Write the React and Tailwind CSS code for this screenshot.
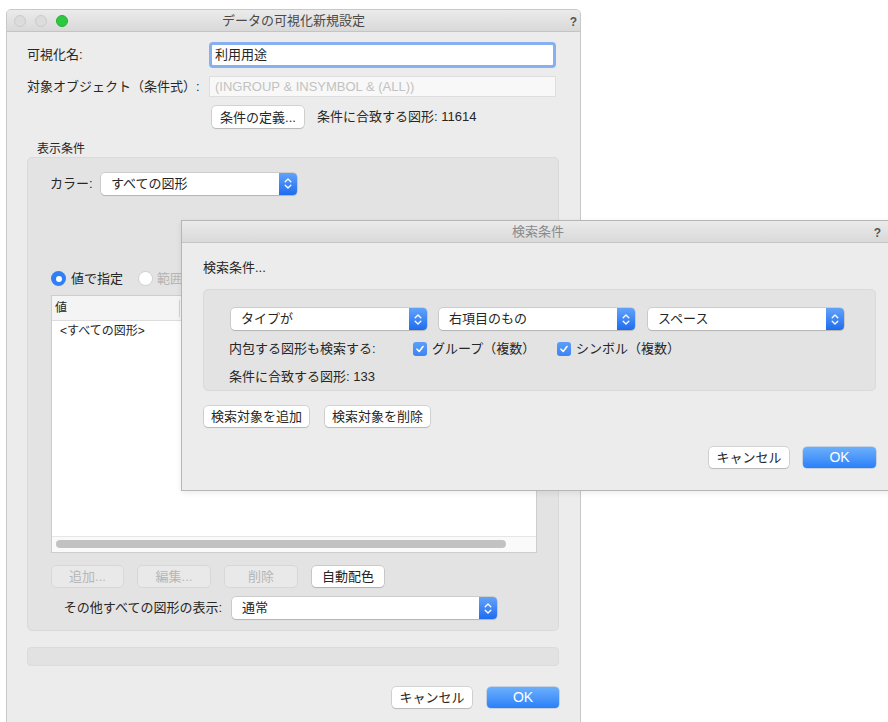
import React from "react";

const font = "font-['Liberation_Sans','Noto_Sans_CJK_JP',sans-serif]";

function Stepper() {
  return (
    <div className="w-[18px] h-full shrink-0 rounded-r-[4px] bg-gradient-to-b from-[#62a2f9] to-[#1d6cef] flex items-center justify-center">
      <svg width="8" height="13" viewBox="0 0 8 13" fill="none" stroke="white" strokeWidth="1.3" strokeLinecap="round" strokeLinejoin="round">
        <path d="M1.2 4.8 L4 2 L6.8 4.8" />
        <path d="M1.2 8.2 L4 11 L6.8 8.2" />
      </svg>
    </div>
  );
}

function Popup({ label, className = "" }) {
  return (
    <div className={"flex h-[22px] rounded-[4px] bg-white shadow-[0_0_0_0.5px_rgba(0,0,0,0.2),0_1px_1px_rgba(0,0,0,0.12)] " + className}>
      <div className="flex-1 pl-[10px] text-[13px] leading-[22px] text-[#262626] whitespace-nowrap">{label}</div>
      <Stepper />
    </div>
  );
}

function Btn({ children, className = "", disabled = false }) {
  const look = disabled
    ? "bg-[#e9e9e9] text-[#b6b6b6] shadow-[0_0_0_0.5px_rgba(0,0,0,0.1)]"
    : "bg-white text-[#262626] shadow-[0_0_0_0.5px_rgba(0,0,0,0.22),0_1px_1px_rgba(0,0,0,0.12)]";
  return (
    <div className={"h-[21px] rounded-[4px] flex items-center justify-center text-[13px] leading-[21px] whitespace-nowrap " + look + " " + className}>
      {children}
    </div>
  );
}

function OkBtn({ className = "" }) {
  return (
    <div className={"h-[21px] rounded-[4px] flex items-center justify-center text-[14px] text-white bg-gradient-to-b from-[#6cb0fb] to-[#2a7ff8] shadow-[0_0_0_0.5px_rgba(0,60,160,0.3)] " + className}>
      OK
    </div>
  );
}

function Check({ label }) {
  return (
    <div className="flex items-center">
      <div className="w-[14px] h-[14px] rounded-[3px] bg-gradient-to-b from-[#5d9ef8] to-[#3a84f5] flex items-center justify-center">
        <svg width="10" height="10" viewBox="0 0 10 10" fill="none" stroke="white" strokeWidth="1.6" strokeLinecap="round" strokeLinejoin="round">
          <path d="M2 5.2 L4.2 7.5 L8 2.5" />
        </svg>
      </div>
      <span className="ml-[5px] text-[13px] text-[#262626]">{label}</span>
    </div>
  );
}

// help glyph sits at the right end of each title bar
function TitleBar({ title, active, helpClass }) {
  return (
    <div className="relative h-[22px] shrink-0 bg-gradient-to-b from-[#ebebeb] to-[#d9d9d9] border-b border-[#c4c4c4] flex items-center justify-center">
      {active && (
        <div className="absolute left-[7px] top-[5px] flex gap-[9px]">
          <div className="w-[12px] h-[12px] rounded-full bg-[#dcdcdc] border border-[#cbcbcb]" />
          <div className="w-[12px] h-[12px] rounded-full bg-[#dcdcdc] border border-[#cbcbcb]" />
          <div className="w-[12px] h-[12px] rounded-full bg-[#2cc840] border border-[#24b036]" />
        </div>
      )}
      <span className={"text-[13px] " + (active ? "text-[#4a4a4a]" : "text-[#8a8a8a]")}>{title}</span>
      <span className={"absolute top-[3px] text-[12px] font-bold text-[#555] " + helpClass}>?</span>
    </div>
  );
}

function MainWindow() {
  return (
    <div className="ml-[6px] mt-[9px] w-[575px] h-[720px] flex flex-col bg-[#ececec] border border-[#c8c8c8] rounded-t-[5px] overflow-hidden">
      <TitleBar title="データの可視化新規設定" active helpClass="right-[3px]" />
      <div className="pl-[20px] pr-[21px] flex flex-col text-[#262626]">
        <div className="mt-[10px] h-[26px] flex items-center">
          <div className="w-[182px] text-[13px]">可視化名:</div>
          <div className="w-[347px] h-[26px] rounded-[4px] border-[3px] border-[#86b0f0] bg-white flex items-center pl-[3px] text-[13px]">
            利用用途
          </div>
        </div>
        <div className="mt-[8px] h-[21px] flex items-center">
          <div className="w-[182px] text-[13px] whitespace-nowrap">対象オブジェクト（条件式）:</div>
          <div className="w-[347px] h-[21px] bg-[#f8f8f8] border border-[#dedede] flex items-center pl-[5px] text-[13px] text-[#c2c2c2]">
            (INGROUP &amp; INSYMBOL &amp; (ALL))
          </div>
        </div>
        <div className="mt-[9px] h-[22px] flex items-center">
          <div className="w-[185px]" />
          <Btn className="w-[92px] h-[22px]">条件の定義...</Btn>
          <div className="ml-[13px] text-[13px]">条件に合致する図形: 11614</div>
        </div>

        <div className="mt-[14px] pl-[10px] text-[12px] leading-[15px]">表示条件</div>
        <div className="h-[474px] rounded-[5px] bg-[#e3e3e3] border border-[#dadada] flex flex-col">
          <div className="mt-[15px] h-[21px] flex items-center">
            <div className="w-[73px] pl-[22px] text-[13px]">カラー:</div>
            <Popup label="すべての図形" className="w-[196px] h-[21px]" />
          </div>

          <div className="mt-[77px] h-[15px] flex items-center pl-[23px]">
            <div className="w-[15px] h-[15px] rounded-full bg-[#2f7ff7] flex items-center justify-center">
              <div className="w-[6px] h-[6px] rounded-full bg-white" />
            </div>
            <span className="ml-[5px] text-[13px]">値で指定</span>
            <div className="ml-[15px] w-[15px] h-[15px] rounded-full bg-white border border-[#cfcfcf]" />
            <span className="ml-[4px] text-[13px] text-[#b5b5b5]">範囲...</span>
          </div>

          <div className="mt-[9px] ml-[23px] w-[486px] h-[258px] bg-white border border-[#cdcdcd] flex flex-col">
            <div className="h-[25px] bg-[#f4f4f4] border-b border-[#dcdcdc] flex items-center relative">
              <span className="pl-[3px] text-[12px]">値</span>
              <div className="absolute left-[127px] top-[4px] w-px h-[17px] bg-[#d4d4d4]" />
            </div>
            <div className="h-[20px] pl-[8px] flex items-center text-[12px]">&lt;すべての図形&gt;</div>
            <div className="flex-1" />
            <div className="h-[16px] bg-[#fafafa] border-t border-[#e6e6e6] pl-[4px] pt-[3px]">
              <div className="w-[450px] h-[8px] rounded-full bg-[#c2c2c2]" />
            </div>
          </div>

          <div className="mt-[13px] h-[21px] flex items-center pl-[24px] gap-[15px]">
            <Btn disabled className="w-[71px]">追加...</Btn>
            <Btn disabled className="w-[72px]">編集...</Btn>
            <Btn disabled className="w-[72px]">削除</Btn>
            <Btn className="w-[72px]">自動配色</Btn>
          </div>

          <div className="mt-[10px] h-[22px] flex items-center">
            <div className="w-[194px] text-right text-[13px] whitespace-nowrap">その他すべての図形の表示:</div>
            <Popup label="通常" className="ml-[10px] w-[265px]" />
          </div>
        </div>

        <div className="mt-[16px] h-[19px] rounded-[4px] bg-[#e2e2e2] border border-[#dbdbdb]" />

        <div className="mt-[21px] flex justify-end gap-[15px]">
          <Btn className="w-[80px]">キャンセル</Btn>
          <OkBtn className="w-[72px]" />
        </div>
      </div>
    </div>
  );
}

function SearchDialog() {
  return (
    <div className="absolute left-[181px] top-[220px] w-[714px] h-[271px] flex flex-col bg-[#ececec] border border-[#b6b6b6] shadow-[0_2px_6px_rgba(0,0,0,0.08)]">
      <TitleBar title="検索条件" helpClass="right-[13px]" />
      <div className="pl-[21px] pr-[18px] flex flex-col text-[#262626]">
        <div className="mt-[17px] h-[16px] text-[13px] leading-[16px]">検索条件...</div>
        <div className="mt-[13px] h-[102px] rounded-[5px] bg-[#e3e3e3] border border-[#dadada] flex flex-col">
          <div className="mt-[18px] h-[22px] flex items-center pl-[27px]">
            <Popup label="タイプが" className="w-[196px]" />
            <Popup label="右項目のもの" className="ml-[12px] w-[196px]" />
            <Popup label="スペース" className="ml-[13px] w-[196px]" />
          </div>
          <div className="mt-[11px] h-[16px] flex items-center pl-[25px]">
            <div className="w-[184px] text-[13px]">内包する図形も検索する:</div>
            <div className="w-[144px]">
              <Check label="グループ（複数）" />
            </div>
            <Check label="シンボル（複数）" />
          </div>
          <div className="mt-[12px] h-[16px] flex items-center pl-[25px] text-[13px]">
            条件に合致する図形: 133
          </div>
        </div>
        <div className="mt-[15px] h-[21px] flex items-center pl-[1px] gap-[16px]">
          <Btn className="w-[105px]">検索対象を追加</Btn>
          <Btn className="w-[105px]">検索対象を削除</Btn>
        </div>
        <div className="mt-[20px] flex justify-end gap-[14px]">
          <Btn className="w-[80px]">キャンセル</Btn>
          <OkBtn className="w-[73px]" />
        </div>
      </div>
    </div>
  );
}

export default function App() {
  return (
    <div className={"relative w-[888px] h-[722px] bg-white overflow-hidden " + font}>
      <MainWindow />
      <SearchDialog />
    </div>
  );
}
